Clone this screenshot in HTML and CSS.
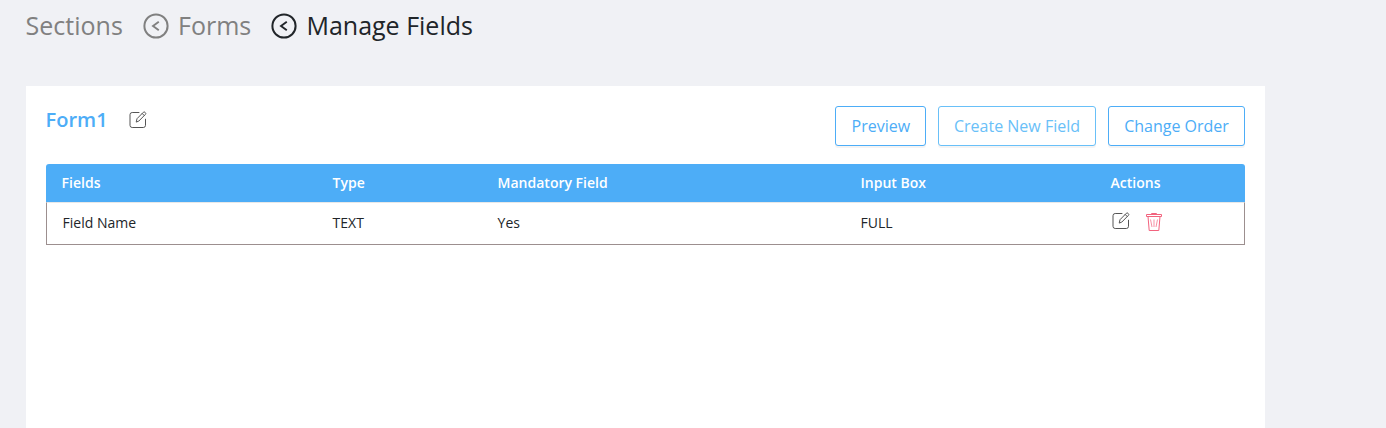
FILE: index.html
```html
<!DOCTYPE html>
<html lang="en">
<head>
<meta charset="utf-8">
<title>Manage Fields</title>
<link rel="stylesheet" href="styles.css">
</head>
<body>
<svg width="0" height="0" class="defs">
  <symbol id="back" viewBox="0 0 26 26"><circle cx="13" cy="13" r="11.600" fill="none" stroke="currentColor" stroke-width="2"/><path d="M15.800 8.700 10 13l5.800 4.300" fill="none" stroke="currentColor" stroke-width="1.900"/></symbol>
  <symbol id="edit" viewBox="0 0 18 18"><path d="M10 1.500H3.200A2.200 2.200 0 0 0 1 3.700V14.300A2.200 2.200 0 0 0 3.200 16.500H14.300A2.200 2.200 0 0 0 16.500 14.300V8.200M7.300 10.700 8 7.700 14.300 1.300a1.200 1.200 0 0 1 1.700 0l.4.4a1.200 1.200 0 0 1 0 1.700L10.100 9.800zM13.200 2.500l2 2" fill="none" stroke="currentColor" stroke-linejoin="round" stroke-linecap="round"/></symbol>
  <symbol id="trash" viewBox="0 0 16 18"><path d="M5.500 1V.5h5V1M.5 1.500h15v2H.5zM2 3.500l1.200 14h9.600L14 3.500" fill="none" stroke="currentColor"/><path d="M4.500 6.500 6 14M8 6.500V14M11.500 6.500 10 14" fill="none" stroke="currentColor" stroke-width=".7"/></symbol>
</svg>
<nav class="breadcrumb">
  <a class="crumb">Sections</a>
  <a class="crumb"><svg class="crumb-icon"><use href="#back"/></svg>Forms</a>
  <a class="crumb current"><svg class="crumb-icon"><use href="#back"/></svg>Manage Fields</a>
</nav>
<main class="card">
  <header class="card-head">
    <h1 class="title">Form1 <svg class="edit"><use href="#edit"/></svg></h1>
    <div class="buttons">
      <button class="btn preview">Preview</button>
      <button class="btn create">Create New Field</button>
      <button class="btn order">Change Order</button>
    </div>
  </header>
  <section class="table">
    <div class="row head"><span>Fields</span><span>Type</span><span>Mandatory Field</span><span>Input Box</span><span>Actions</span></div>
    <div class="row body"><span>Field Name</span><span>TEXT</span><span>Yes</span><span>FULL</span><span class="actions"><svg class="edit"><use href="#edit"/></svg><svg class="trash"><use href="#trash"/></svg></span></div>
  </section>
</main>
</body>
</html>
```
FILE: styles.css
```css
* { box-sizing: border-box; }
body {
  margin: 0;
  height: 428px;
  overflow: hidden;
  background: #f0f1f5;
  font-family: "Open Sans", sans-serif;
  color: #212529;
  display: flex;
  flex-direction: column;
}
.defs { display: none; }
.breadcrumb {
  flex: none;
  height: 86px;
  padding: 7px 0 0 25.6px;
  display: flex;
  gap: 20.1px;
  font-size: 25px;
  line-height: 36px;
}
.crumb { display: flex; color: #808080; white-space: nowrap; }
.crumb.current { color: #212529; }
.crumb-icon { width: 26px; height: 26px; margin: 5.5px 9.1px 0 0; }
.card {
  flex: 1;
  width: 1239px;
  margin-left: 26px;
  padding: 20px;
  background: #fff;
}
.card-head { display: flex; justify-content: space-between; height: 58px; }
.title {
  margin: 0 0 0 -.4px;
  display: flex;
  gap: 21.4px;
  font-size: 20px;
  line-height: 28px;
  font-weight: 600;
  color: #4dadf7;
}
.edit { width: 18px; height: 18px; color: #555; }
.title .edit { margin-top: 5px; }
.buttons { display: flex; gap: 12px; }
.btn {
  height: 40px;
  padding: 0;
  border: 1px solid #4dadf7;
  border-radius: 3px;
  background: #fff;
  box-shadow: 0 2px 0 rgba(0, 0, 0, .045);
  color: #4dadf7;
  font: 16px "Open Sans", sans-serif;
}
.preview { width: 91px; padding-left: .6px; }
.create { width: 158px; color: #69c0f8; border-color: #69c0f8; }
.order { width: 137px; }
.row {
  display: grid;
  grid-template-columns: 271px 165px 363px 250px 1fr;
  align-items: center;
  padding: 0 0 2px 15.6px;
  font-size: 14px;
}
.head {
  height: 38px;
  border-radius: 3px 3px 0 0;
  background: #4dadf7;
  color: #fff;
  font-weight: 600;
}
.body {
  height: 43px;
  border: 1px solid #9c8f8f;
  border-top-color: #e8e8e8;
  grid-template-columns: 270px 165px 363px 250px 1fr;
}
.actions { display: flex; gap: 16px; margin: -3px 0 0 1.4px; }
.trash { width: 16px; height: 18px; margin-top: 1px; color: #f2637e; }
```
